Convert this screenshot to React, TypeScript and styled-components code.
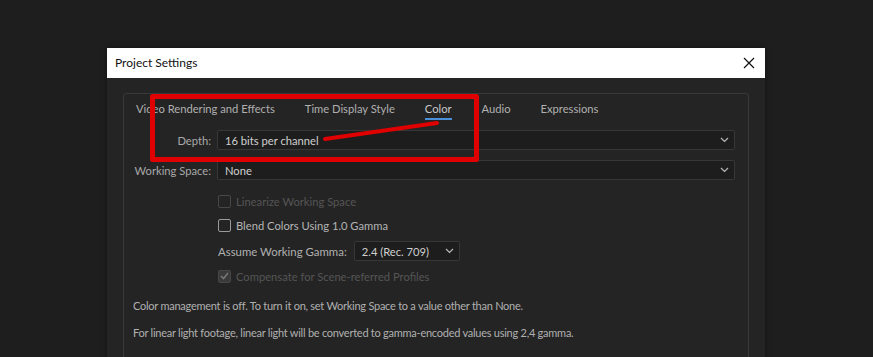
import React from "react";
import styled, { createGlobalStyle } from "styled-components";

const GlobalStyle = createGlobalStyle`
  html, body {
    margin: 0;
    background: #1e1e1e;
    font-family: Lato, "Noto Sans", sans-serif;
    overflow: hidden;
  }
`;

const Page = styled.div`
  position: relative;
  height: 357px;
  padding: 48px 0 0 107px;
  box-sizing: border-box;
`;

const Dialog = styled.div`
  width: 658px;
  height: 320px;
  background: #242424;
  box-shadow: 0 0 6px rgba(0, 0, 0, 0.4);
`;

const TitleBar = styled.div`
  height: 30px;
  background: #ffffff;
  display: flex;
  align-items: center;
  justify-content: space-between;
  padding: 0 9px 1px 8px;
  box-sizing: border-box;
  font-size: 12px;
  color: #111;
`;

const CloseButton = styled.div`
  width: 14px;
  height: 14px;
  display: flex;
  align-items: center;
  justify-content: center;
`;

const Body = styled.div`
  padding: 15px 16px 0 16px;
`;

const Panel = styled.div`
  border: 1px solid #383838;
  border-bottom: none;
  border-radius: 4px 4px 0 0;
  height: 300px;
  padding: 0 13px 0 9px;
`;

const Tabs = styled.div`
  display: flex;
  gap: 30px;
  padding: 7px 0 0 3px;
  height: 28px;
  box-sizing: border-box;
`;

const Tab = styled.div<{ $active?: boolean }>`
  font-size: 11.2px;
  color: ${(p) => (p.$active ? "#c8c8c8" : "#b0b0b0")};
  height: 19px;
  line-height: 15px;
  border-bottom: 2px solid ${(p) => (p.$active ? "#4a8fd8" : "transparent")};
  box-sizing: border-box;
  white-space: nowrap;
`;

const Form = styled.div`
  display: grid;
  grid-template-columns: 78px 1fr;
  column-gap: 6px;
  row-gap: 10px;
  align-items: center;
  margin-top: 8px;
`;

const Label = styled.div`
  font-size: 11.2px;
  color: #a8a8a8;
  text-align: right;
  white-space: nowrap;
`;

const Select = styled.div<{ $width?: number }>`
  height: 20px;
  width: ${(p) => (p.$width ? `${p.$width}px` : "auto")};
  box-sizing: border-box;
  background: #1d1d1d;
  border: 1px solid #373737;
  border-radius: 2px;
  display: flex;
  align-items: center;
  justify-content: space-between;
  padding: 0 5px 0 7px;
  font-size: 11.2px;
  color: #cfcfcf;
`;

const Options = styled.div`
  display: flex;
  flex-direction: column;
  padding-left: 85px;
  margin-top: 9px;
`;

const CheckRow = styled.div<{ $disabled?: boolean }>`
  display: flex;
  align-items: center;
  gap: 5px;
  height: 24px;
  font-size: 11.2px;
  color: ${(p) => (p.$disabled ? "#555" : "#b4b4b4")};
`;

const Box = styled.div<{ $disabled?: boolean }>`
  width: 13px;
  height: 13px;
  box-sizing: border-box;
  border: 1px solid ${(p) => (p.$disabled ? "#474747" : "#9a9a9a")};
  background: ${(p) => (p.$disabled ? "#3a3a3a" : "transparent")};
  border-radius: 2px;
  display: flex;
  align-items: center;
  justify-content: center;
`;

const EmptyBox = styled(Box)`
  background: transparent;
`;

const GammaRow = styled.div`
  display: flex;
  align-items: center;
  gap: 7px;
  height: 26px;
  margin-top: 1px;
  font-size: 11.4px;
  color: #b0b0b0;
`;

const Info = styled.p`
  margin: 0;
  font-size: 11px;
  letter-spacing: -0.25px;
  color: #b0b0b0;
  line-height: 16px;
`;

const InfoBlock = styled.div`
  display: flex;
  flex-direction: column;
  gap: 11px;
  margin-top: 10px;
`;

const Annotation = styled.svg`
  position: absolute;
  left: 0;
  top: 0;
  pointer-events: none;
`;

const Chevron = () => (
  <svg width="9" height="6" viewBox="0 0 9 6">
    <path d="M1 1 L4.5 4.5 L8 1" fill="none" stroke="#b8b8b8" strokeWidth="1.2" />
  </svg>
);

export default function App() {
  return (
    <>
      <GlobalStyle />
      <Page>
        <Dialog>
          <TitleBar>
            <span>Project Settings</span>
            <CloseButton>
              <svg width="12" height="12" viewBox="0 0 12 12">
                <path d="M1 1 L11 11 M11 1 L1 11" stroke="#111" strokeWidth="1.2" />
              </svg>
            </CloseButton>
          </TitleBar>
          <Body>
            <Panel>
              <Tabs>
                <Tab>Video Rendering and Effects</Tab>
                <Tab>Time Display Style</Tab>
                <Tab $active>Color</Tab>
                <Tab>Audio</Tab>
                <Tab>Expressions</Tab>
              </Tabs>
              <Form>
                <Label>Depth:</Label>
                <Select>
                  <span>16 bits per channel</span>
                  <Chevron />
                </Select>
                <Label>Working Space:</Label>
                <Select>
                  <span>None</span>
                  <Chevron />
                </Select>
              </Form>
              <Options>
                <CheckRow $disabled>
                  <EmptyBox $disabled />
                  Linearize Working Space
                </CheckRow>
                <CheckRow>
                  <Box />
                  Blend Colors Using 1.0 Gamma
                </CheckRow>
                <GammaRow>
                  <span>Assume Working Gamma:</span>
                  <Select $width={106}>
                    <span>2.4 (Rec. 709)</span>
                    <Chevron />
                  </Select>
                </GammaRow>
                <CheckRow $disabled>
                  <Box $disabled>
                    <svg width="9" height="8" viewBox="0 0 9 8">
                      <path d="M1 4 L3.5 6.5 L8 1" fill="none" stroke="#777" strokeWidth="1.6" />
                    </svg>
                  </Box>
                  Compensate for Scene-referred Profiles
                </CheckRow>
              </Options>
              <InfoBlock>
                <Info>Color management is off. To turn it on, set Working Space to a value other than None.</Info>
                <Info>For linear light footage, linear light will be converted to gamma-encoded values using 2,4 gamma.</Info>
              </InfoBlock>
            </Panel>
          </Body>
        </Dialog>
        <Annotation width="873" height="357" viewBox="0 0 873 357">
          <path
            d="M152.5 96.5 L476.5 96.5 L476.5 159.5 L152.5 159.5 Z"
            fill="none"
            stroke="#e00000"
            strokeWidth="5"
            strokeLinejoin="round"
          />
          <path d="M325 139 L437 123" stroke="#e00000" strokeWidth="4" strokeLinecap="round" />
        </Annotation>
      </Page>
    </>
  );
}
